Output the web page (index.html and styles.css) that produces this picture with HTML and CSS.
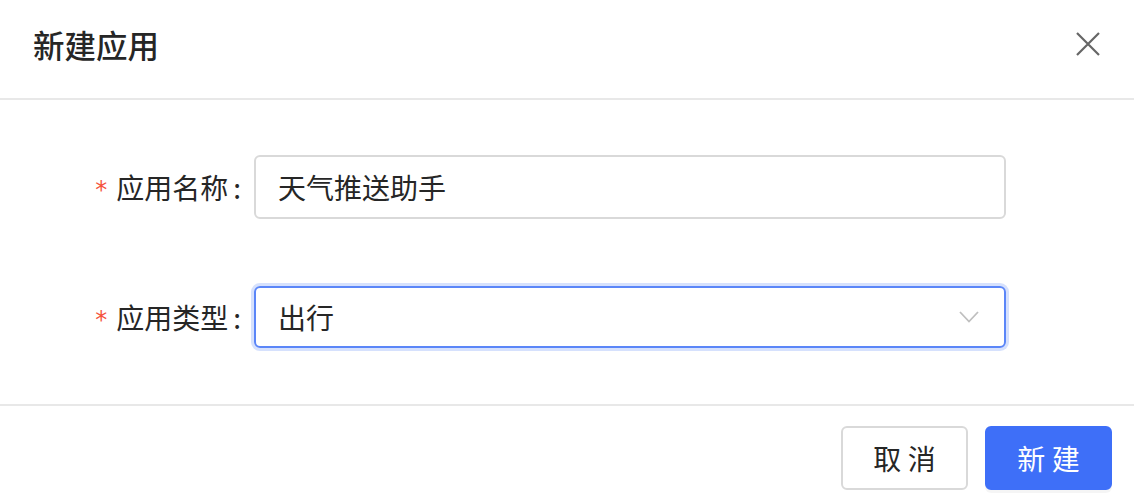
FILE: index.html
```html
<!DOCTYPE html>
<html lang="zh">
<head>
<meta charset="utf-8">
<title>新建应用</title>
<link rel="stylesheet" href="styles.css">
</head>
<body>
<div class="modal">
  <div class="modal-header">
    <div class="modal-title">新建应用</div>
    <button class="close-btn" aria-label="关闭">
      <svg width="24" height="24" viewBox="0 0 24 24"><path d="M1 1 L23 23 M23 1 L1 23" stroke="#666" stroke-width="2.2" fill="none"/></svg>
    </button>
  </div>
  <div class="modal-body">
    <div class="form-row">
      <label class="form-label"><span class="req">*</span>应用名称<span class="colon">:</span></label>
      <div class="field input">天气推送助手</div>
    </div>
    <div class="form-row">
      <label class="form-label"><span class="req">*</span>应用类型<span class="colon">:</span></label>
      <div class="field select focused">
        <span>出行</span>
        <svg class="arrow" width="20" height="12" viewBox="0 0 20 12"><path d="M1 1 L10 10.5 L19 1" stroke="#bfbfbf" stroke-width="1.8" fill="none"/></svg>
      </div>
    </div>
  </div>
  <div class="modal-footer">
    <button class="btn btn-default">取 消</button>
    <button class="btn btn-primary">新 建</button>
  </div>
</div>
</body>
</html>
```
FILE: styles.css
```css
html, body {
  margin: 0;
  padding: 0;
  background: #fff;
}
body {
  font-family: "Noto Sans CJK SC", "Noto Sans", sans-serif;
  color: rgba(0, 0, 0, 0.85);
}
.modal {
  width: 1134px;
  height: 502px;
  overflow: hidden;
}
.modal-header {
  height: 100px;
  box-sizing: border-box;
  padding: 0 34px 10px 33px;
  display: flex;
  align-items: center;
  justify-content: space-between;
  border-bottom: 2px solid #e8e8e8;
}
.modal-title {
  font-size: 31.5px;
  font-weight: 500;
  line-height: 40px;
  color: #262626;
}
.close-btn {
  border: 0;
  background: transparent;
  padding: 0;
  width: 24px;
  height: 24px;
  display: flex;
}
.modal-body {
  padding: 55px 0 56px 0;
  display: flex;
  flex-direction: column;
  gap: 67px;
  border-bottom: 2px solid #e8e8e8;
}
.form-row {
  display: flex;
  align-items: center;
}
.form-label {
  width: 254px;
  box-sizing: border-box;
  display: flex;
  justify-content: flex-end;
  align-items: center;
  font-size: 28px;
  color: #262626;
  padding-right: 13px;
}
.req {
  color: #f5533d;
  font-size: 24px;
  margin-right: 9px;
  font-family: "DejaVu Sans", sans-serif;
  position: relative;
  top: 3px;
}
.colon {
  margin-left: 5px;
}
.field {
  width: 752px;
  height: 64px;
  box-sizing: border-box;
  border: 2px solid #d9d9d9;
  border-radius: 6px;
  padding: 0 22px;
  display: flex;
  align-items: center;
  font-size: 28px;
  color: #262626;
}
.select {
  height: 62px;
  justify-content: space-between;
}
.select.focused {
  border-color: #5b86f8;
  box-shadow: 0 0 0 3px #d6e1fd;
}
.arrow {
  margin-right: 3px;
}
.modal-footer {
  padding: 20px 22px 0 0;
  display: flex;
  justify-content: flex-end;
  gap: 17px;
}
.btn {
  width: 127px;
  height: 64px;
  box-sizing: border-box;
  border-radius: 6px;
  font-family: "Noto Sans CJK SC", sans-serif;
  font-size: 28px;
  cursor: pointer;
}
.btn-default {
  background: #fff;
  border: 2px solid #d9d9d9;
  color: #262626;
}
.btn-primary {
  background: #3e6ff8;
  border: 2px solid #3e6ff8;
  color: #fff;
  box-shadow: 0 3px 0 rgba(0, 0, 0, 0.04);
}
```
